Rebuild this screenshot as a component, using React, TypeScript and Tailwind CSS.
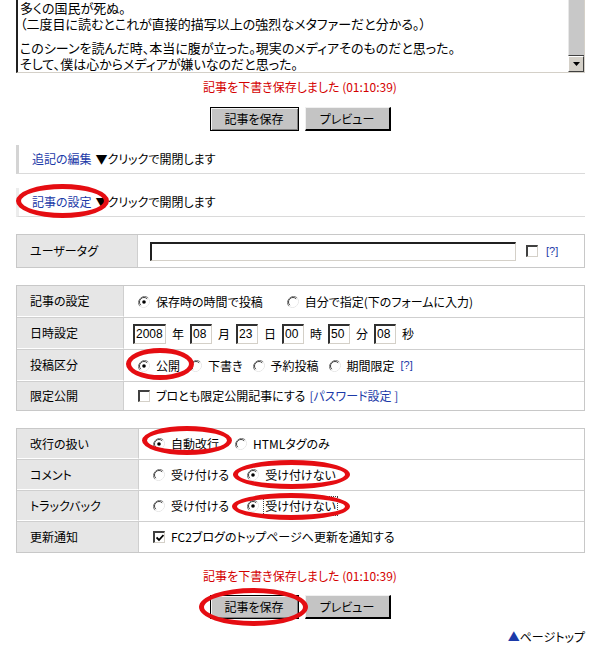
import type { ReactNode } from "react";

const jp = "[font-family:'Noto_Sans_CJK_JP','Liberation_Sans',sans-serif] [font-feature-settings:'palt']";

function Radio({ checked = false }: { checked?: boolean }) {
  return (
    <svg width="12" height="12" viewBox="0 0 12 12" className="shrink-0">
      <path d="M10.2 1.8A6 6 0 0 0 1.8 10.2" fill="none" stroke="#808080" strokeWidth="1" />
      <path d="M1.8 10.2A6 6 0 0 0 10.2 1.8" fill="none" stroke="#e8e8e8" strokeWidth="1" />
      <circle cx="6" cy="6" r="4.6" fill="#fff" />
      <path d="M9.2 2.8A4.5 4.5 0 0 0 2.8 9.2" fill="none" stroke="#404040" strokeWidth="1" />
      {checked && <circle cx="6" cy="6" r="1.8" fill="#000" />}
    </svg>
  );
}

function Check({ checked = false }: { checked?: boolean }) {
  return (
    <span className="w-[12px] h-[12px] shrink-0 bg-white border-t-2 border-l-2 border-[#404040] border-b border-r border-b-[#d4d0c8] border-r-[#d4d0c8] flex items-center justify-center">
      {checked && (
        <svg width="8" height="8" viewBox="0 0 8 8">
          <path d="M0.5 3.5 L3 6 L7.5 1" fill="none" stroke="#000" strokeWidth="1.8" />
        </svg>
      )}
    </span>
  );
}

function Field({ value, w }: { value: string; w: string }) {
  return (
    <span
      className={`${w} h-[20px] bg-white border-t-2 border-l-2 border-[#303030] border-b border-r border-b-[#d4d0c8] border-r-[#d4d0c8] text-[12px] leading-[17px] pl-[1px] [font-family:'Liberation_Sans',sans-serif]`}
    >
      {value}
    </span>
  );
}

function Row({
  label,
  labelW,
  children,
  h,
  last = false,
  pad = "pl-[14px]",
}: {
  label: string;
  labelW: string;
  children: ReactNode;
  h: string;
  last?: boolean;
  pad?: string;
}) {
  return (
    <div className={`flex ${h} ${last ? "" : "border-b border-[#cfcfcf]"}`}>
      <div
        className={`${labelW} shrink-0 bg-[#e6e6e6] border-r border-[#cfcfcf] flex items-center pl-[13px] ${
          last ? "" : "border-b border-b-white"
        }`}
      >
        {label}
      </div>
      <div className={`flex-1 flex items-center gap-[4px] ${pad}`}>{children}</div>
    </div>
  );
}

function Buttons() {
  return (
    <div className="flex justify-center gap-[6px] ml-[6px]">
      <button className="w-[89px] h-[24px] bg-[#c4c4c4] border border-black shadow-[inset_1px_1px_0_#f4f4f4,inset_-1px_-1px_0_#808080] text-[12px]">
        記事を保存
      </button>
      <button className="w-[86px] h-[24px] bg-[#c4c4c4] border-t border-l border-[#f0f0f0] border-b-2 border-r-2 border-b-black border-r-black text-[12px]">
        プレビュー
      </button>
    </div>
  );
}

function Section({ title, bar }: { title: string; bar: string }) {
  return (
    <div className={`ml-4 w-[569px] h-[29px] border-l-[3px] ${bar} border-b border-b-[#dadada] flex items-center pl-[13px] text-[12px]`}>
      <span className="text-[#1c3aa8]">{title}</span>
      <span className="ml-[4px]">▼クリックで開閉します</span>
    </div>
  );
}

const ellipse = "absolute rounded-[50%] border-[5px] border-[#e50d12] pointer-events-none";

export default function App() {
  return (
    <div className={`relative w-[594px] h-[658px] overflow-hidden bg-white text-black ${jp}`}>
      {/* 本文エリア（スクロール済み） */}
      <div className="ml-4 w-[569px] h-[73px] flex border-l-2 border-l-[#202020] border-b border-b-[#d4d0c8] border-r border-r-[#d4d0c8]">
        <div className="flex-1 pl-[2px] pt-[1px] text-[13px] leading-[16px] [font-family:'Liberation_Sans','Noto_Sans_CJK_JP',sans-serif]">
          <p>多くの国民が死ぬ。</p>
          <p>（二度目に読むとこれが直接的描写以上の強烈なメタファーだと分かる。）</p>
          <p className="mt-[8px]">このシーンを読んだ時、本当に腹が立った。現実のメディアそのものだと思った。</p>
          <p>そして、僕は心からメディアが嫌いなのだと思った。</p>
        </div>
        <div className="w-[16px] flex flex-col bg-[#d4d0c8]">
          <div className="flex-1 bg-[#c8c8c8] border-l border-[#e8e8e8] border-b border-b-[#404040]" />
          <div className="h-[16px] bg-[#d4d0c8] border-t border-l border-white border-b border-r border-b-[#404040] border-r-[#404040] flex items-center justify-center">
            <svg width="7" height="4" viewBox="0 0 7 4">
              <path d="M0 0 H7 L3.5 4 Z" fill="#000" />
            </svg>
          </div>
        </div>
      </div>

      <div className="mt-[6px] h-[16px] text-center text-[12px] leading-[16px] text-[#d40000] ml-[6px]">
        記事を下書き保存しました (01:10:39)
      </div>
      <div className="mt-[12px]">
        <Buttons />
      </div>

      <div className="mt-[14px]">
        <Section title="追記の編集" bar="border-l-[#d4d4d4]" />
      </div>
      <div className="mt-[14px]">
        <Section title="記事の設定" bar="border-l-[#ececec]" />
      </div>

      {/* ユーザータグ */}
      <div className="ml-4 mt-[17px] w-[569px] border border-[#c8c8c8] text-[12px]">
        <Row label="ユーザータグ" labelW="w-[121px]" h="h-[32px]" last pad="pl-[12px]">
          <span className="w-[366px] h-[19px] bg-white border-t-2 border-l-2 border-[#202020] border-b border-r border-b-[#d4d0c8] border-r-[#d4d0c8]" />
          <span className="ml-[6px]">
            <Check />
          </span>
          <span className="ml-[4px] text-[#1c3aa8] [font-family:'Liberation_Sans',sans-serif] text-[11px]">[?]</span>
        </Row>
      </div>

      {/* 投稿設定 */}
      <div className="ml-4 mt-[17px] w-[569px] border border-[#c8c8c8] text-[12px]">
        <Row label="記事の設定" labelW="w-[107px]" h="h-[32px]">
          <Radio checked />
          <span className="ml-[2px]">保存時の時間で投稿</span>
          <span className="ml-[20px]">
            <Radio />
          </span>
          <span className="ml-[2px]">自分で指定(下のフォームに入力)</span>
        </Row>
        <Row label="日時設定" labelW="w-[107px]" h="h-[32px]" pad="pl-[9px]">
          <Field value="2008" w="w-[33px]" />
          <span className="mx-[2px]">年</span>
          <Field value="08" w="w-[22px]" />
          <span className="mx-[2px]">月</span>
          <Field value="23" w="w-[22px]" />
          <span className="mx-[2px]">日</span>
          <Field value="00" w="w-[22px]" />
          <span className="mx-[2px]">時</span>
          <Field value="50" w="w-[22px]" />
          <span className="mx-[2px]">分</span>
          <Field value="08" w="w-[22px]" />
          <span className="mx-[2px]">秒</span>
        </Row>
        <Row label="投稿区分" labelW="w-[107px]" h="h-[32px]">
          <Radio checked />
          <span className="ml-[2px]">公開</span>
          <span className="ml-[6px]">
            <Radio />
          </span>
          <span className="ml-[2px]">下書き</span>
          <span className="ml-[6px]">
            <Radio />
          </span>
          <span className="ml-[2px]">予約投稿</span>
          <span className="ml-[6px]">
            <Radio />
          </span>
          <span className="ml-[2px]">期間限定</span>
          <span className="ml-[2px] text-[#1c3aa8] [font-family:'Liberation_Sans',sans-serif] text-[11px]">[?]</span>
        </Row>
        <Row label="限定公開" labelW="w-[107px]" h="h-[28px]" last>
          <Check />
          <span className="ml-[2px]">ブロとも限定公開記事にする</span>
          <span className="text-[#1c3aa8]">[パスワード設定 ]</span>
        </Row>
      </div>

      {/* 改行・コメント */}
      <div className="ml-4 mt-[17px] w-[569px] border border-[#c8c8c8] text-[12px]">
        <Row label="改行の扱い" labelW="w-[122px]" h="h-[31px]">
          <Radio checked />
          <span className="ml-[2px]">自動改行</span>
          <span className="ml-[12px]">
            <Radio />
          </span>
          <span className="ml-[2px]">HTMLタグのみ</span>
        </Row>
        <Row label="コメント" labelW="w-[122px]" h="h-[31px]">
          <Radio />
          <span className="ml-[2px]">受け付ける</span>
          <span className="ml-[14px]">
            <Radio checked />
          </span>
          <span className="ml-[2px]">受け付けない</span>
        </Row>
        <Row label="トラックバック" labelW="w-[122px]" h="h-[31px]">
          <Radio />
          <span className="ml-[2px]">受け付ける</span>
          <span className="ml-[14px]">
            <Radio checked />
          </span>
          <span className="ml-[1px] px-[1px] outline-1 outline-dotted outline-[#404040]">受け付けない</span>
        </Row>
        <Row label="更新通知" labelW="w-[122px]" h="h-[30px]" last>
          <Check checked />
          <span className="ml-[2px]">FC2ブログのトップページへ更新を通知する</span>
        </Row>
      </div>

      <div className="mt-[15px] h-[16px] text-center text-[12px] leading-[16px] text-[#d40000] ml-[6px]">
        記事を下書き保存しました (01:10:39)
      </div>
      <div className="mt-[11px]">
        <Buttons />
      </div>
      <div className="mt-[9px] mr-[9px] text-right text-[12px]">
        <span className="text-[#1c3aa8]">▲</span>ページトップ
      </div>

      {/* 赤い丸印 */}
      <div className={`${ellipse} left-[16px] top-[184px] w-[93px] h-[34px]`} />
      <div className={`${ellipse} left-[126px] top-[348px] w-[68px] h-[32px]`} />
      <div className={`${ellipse} left-[142px] top-[426px] w-[90px] h-[29px]`} />
      <div className={`${ellipse} left-[233px] top-[460px] w-[117px] h-[29px]`} />
      <div className={`${ellipse} left-[232px] top-[493px] w-[118px] h-[27px]`} />
      <div className={`${ellipse} left-[199px] top-[588px] w-[109px] h-[38px]`} />
    </div>
  );
}
